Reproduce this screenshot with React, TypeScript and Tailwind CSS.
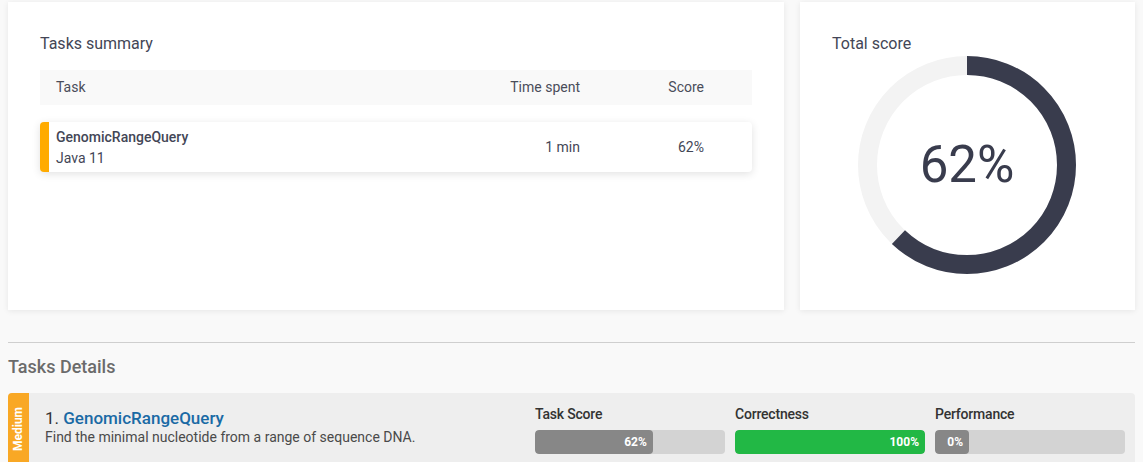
import React from 'react';

const font = { fontFamily: 'Roboto, "Liberation Sans", sans-serif' };

const Bar: React.FC<{ label: string; value: number; color: string }> = ({ label, value, color }) => (
  <div className="w-[190px]">
    <div className="text-[14px] font-medium text-[#333] leading-4 tracking-[-0.2px]">{label}</div>
    <div className="mt-2 h-6 w-full rounded bg-[#d3d3d3] overflow-hidden">
      <div
        className={`h-full rounded flex items-center justify-end pr-1.5 min-w-[34px] ${color}`}
        style={{ width: `${value}%` }}
      >
        <span className="text-[12px] font-bold text-white">{value}%</span>
      </div>
    </div>
  </div>
);

export default function App() {
  const r = 99.5;
  const c = 2 * Math.PI * r;
  return (
    <div className="min-h-[462px] bg-[#f9f9f9] px-2 pt-[2px] text-[#434656]" style={font}>
      {/* Top cards */}
      <div className="flex gap-4">
        <div className="w-[776px] h-[308px] bg-white shadow-[0_1px_6px_rgba(0,0,0,0.08)] px-8 pt-[32px]">
          <h2 className="text-[16px] leading-5">Tasks summary</h2>
          <div className="mt-[16px] h-[35px] bg-[#f9f9f9] flex items-center text-[14px] text-[#4a4d5a]">
            <div className="flex-1 pl-4">Task</div>
            <div className="w-[140px] text-right">Time spent</div>
            <div className="w-[124px] text-right">Score</div>
            <div className="w-[48px]" />
          </div>
          <div className="mt-[17px] h-[50px] bg-white rounded shadow-[0_2px_8px_rgba(0,0,0,0.12)] flex items-center border-l-[9px] border-[#ffab00] text-[14px]">
            <div className="flex-1 pl-[7px]">
              <div className="font-medium leading-5">GenomicRangeQuery</div>
              <div className="leading-5 mt-[1px]">Java 11</div>
            </div>
            <div className="w-[140px] text-right">1 min</div>
            <div className="w-[124px] text-right">62%</div>
            <div className="w-[48px]" />
          </div>
        </div>
        <div className="w-[335px] h-[308px] bg-white shadow-[0_1px_6px_rgba(0,0,0,0.08)] px-8 pt-[32px]">
          <h2 className="text-[16px] leading-5">Total score</h2>
          <div className="relative ml-[26px] mt-[2px] w-[218px] h-[218px]">
            <svg width="218" height="218" viewBox="0 0 218 218">
              <circle cx="109" cy="109" r={r} fill="none" stroke="#f3f3f3" strokeWidth="19" />
              <circle
                cx="109"
                cy="109"
                r={r}
                fill="none"
                stroke="#393c4d"
                strokeWidth="19"
                strokeDasharray={`${c * 0.62} ${c}`}
                transform="rotate(-90 109 109)"
              />
            </svg>
            <div className="absolute inset-0 flex items-center justify-center text-[51px] text-[#393c4d] leading-none pb-[2px]">
              62%
            </div>
          </div>
        </div>
      </div>

      {/* Details */}
      <div className="mt-[32px] border-t border-[#cfcfcf] w-[1127px]" />
      <h3 className="mt-[14px] text-[18px] font-medium text-[#6b6b6b] leading-5">Tasks Details</h3>
      <div className="mt-[16px] w-[1127px] h-[72px] bg-[#eeeeee] rounded-t flex">
        <div className="w-[21px] bg-[#f9a825] rounded-tl flex items-center justify-center">
          <span className="-rotate-90 text-white text-[12px] font-bold whitespace-nowrap">Medium</span>
        </div>
        <div className="flex-1 pl-4 pt-[15px]">
          <div className="text-[17px] leading-5">
            <span className="text-[#333]">1. </span>
            <span className="text-[#1a6aa5] font-medium">GenomicRangeQuery</span>
          </div>
          <div className="text-[14px] text-[#4a4a4a] leading-4 mt-[1px]">
            Find the minimal nucleotide from a range of sequence DNA.
          </div>
        </div>
        <div className="flex gap-[10px] pt-[13px] pr-[10px]">
          <Bar label="Task Score" value={62} color="bg-[#878787]" />
          <Bar label="Correctness" value={100} color="bg-[#22b845]" />
          <Bar label="Performance" value={0} color="bg-[#878787]" />
        </div>
      </div>
    </div>
  );
}
